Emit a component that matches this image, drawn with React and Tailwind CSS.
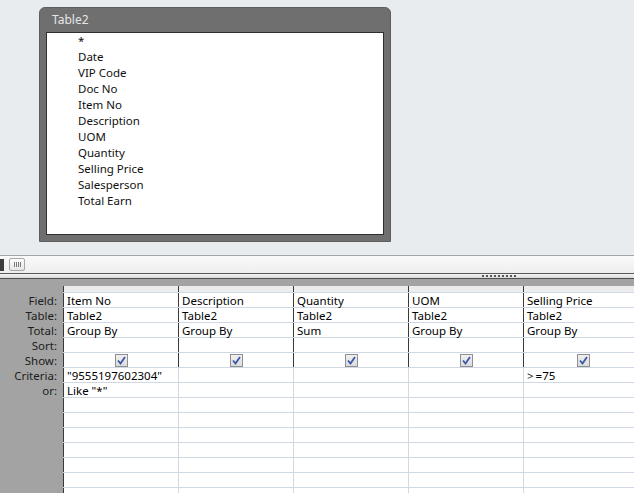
import React from "react";

const fields = ["*", "Date", "VIP Code", "Doc No", "Item No", "Description", "UOM", "Quantity", "Selling Price", "Salesperson", "Total Earn"];

const cols = [
  { field: "Item No", table: "Table2", total: "Group By", criteria: "\"9555197602304\"", or: "Like \"*\"" },
  { field: "Description", table: "Table2", total: "Group By", criteria: "", or: "" },
  { field: "Quantity", table: "Table2", total: "Sum", criteria: "", or: "" },
  { field: "UOM", table: "Table2", total: "Group By", criteria: "", or: "" },
  {
    field: "Selling Price",
    table: "Table2",
    total: "Group By",
    criteria: (
      <span>
        <span className="text-[#222]">&gt;</span>
        <span className="ml-[2px]">=75</span>
      </span>
    ),
    or: "",
  },
];

function Check() {
  return (
    <div className="w-[13px] h-[13px] border border-[#8f8f8f] bg-gradient-to-b from-[#f0f0f0] to-[#dcdcdc] flex items-center justify-center">
      <svg width="9" height="9" viewBox="0 0 9 9">
        <path d="M1 4.5 L3.5 7.5 L8 1" fill="none" stroke="#3c57a8" strokeWidth="1.8" />
      </svg>
    </div>
  );
}

function Cell({ children, dark, center, last }) {
  return (
    <div
      className={`h-full shrink-0 ${last ? "w-[120px]" : "w-[115px]"} border-l ${dark ? "border-[#3a3a3a]" : "border-[#d0d7e5]"} ${center ? "justify-center" : "pl-[3px]"} flex items-center whitespace-nowrap`}
    >
      {children}
    </div>
  );
}

function Row({ label, values, dark, isCheck }) {
  return (
    <div className="flex h-[15px] shrink-0">
      <div className="w-[63px] shrink-0 bg-[#a3a3a3] text-right pr-[6px] text-[#1c1c1c] leading-[15px]">{label}</div>
      <div className="flex bg-white border-b border-[#d0d7e5] h-[15px] leading-[15px] text-black">
        {values.map((v, i) => (
          <Cell key={i} dark={i === 0 || dark} center={isCheck} last={i === values.length - 1}>
            {isCheck ? <Check /> : v}
          </Cell>
        ))}
      </div>
    </div>
  );
}

export default function App() {
  const font = { fontFamily: '"Noto Sans", "Liberation Sans", sans-serif' };
  return (
    <div className="w-[634px] h-[493px] overflow-hidden flex flex-col text-[11.5px]" style={font}>
      {/* top design area */}
      <div className="h-[256px] shrink-0 bg-[#e9ecef] pt-[7px] pl-[39px] border-b border-[#a5a5a5]">
        <div className="w-[352px] h-[235px] bg-[#6f6f6f] rounded-t-[6px] border border-[#5e5e5e] flex flex-col px-[6px] pb-[6px]">
          <div className="h-[24px] text-[12px] text-[#e6e6e6] pl-[6px] pt-[5px] leading-[14px]">Table2</div>
          <div className="flex-1 bg-white border border-[#2e2e2e] pl-[31px] text-[#101010] leading-[16px]">
            {fields.map((f) => (
              <div key={f} className="h-[16px]">{f}</div>
            ))}
          </div>
        </div>
      </div>
      {/* scroll area */}
      <div className="h-[18px] shrink-0 bg-gradient-to-b from-[#fafafa] to-[#eeeeee] flex items-center border-b border-[#5a5a5a]">
        <div className="w-[4px] h-[12px] bg-[#3d3d3d]" />
        <div className="ml-[5px] w-[16px] h-[13px] border border-[#a8a8a8] rounded-[2px] bg-gradient-to-b from-[#fdfdfd] to-[#e6e6e6] flex items-center justify-center gap-[1px]">
          <div className="w-px h-[5px] bg-[#7a7a7a]" />
          <div className="w-px h-[5px] bg-[#7a7a7a]" />
          <div className="w-px h-[5px] bg-[#7a7a7a]" />
          <div className="w-px h-[5px] bg-[#7a7a7a]" />
        </div>
      </div>
      {/* splitter */}
      <div className="h-[5px] shrink-0 bg-gradient-to-b from-[#f4f4f4] to-[#dcdcdc] border-b border-[#505050] flex items-center pl-[482px] gap-[2px]">
        {Array.from({ length: 9 }).map((_, i) => (
          <div key={i} className="w-[2px] h-[2px] bg-[#555555]" />
        ))}
      </div>
      <div className="h-[7px] shrink-0 bg-[#a3a3a3]" />
      {/* grid */}
      <div className="flex-1 flex flex-col bg-[#a3a3a3] overflow-hidden">
        <div className="flex h-[7px] shrink-0">
          <div className="w-[63px] shrink-0 bg-[#a3a3a3]" />
          <div className="flex bg-[#ececec] border-b border-[#d0d7e5] h-[7px]">
            {cols.map((c, i) => (
              <Cell key={i} dark last={i === cols.length - 1}></Cell>
            ))}
          </div>
        </div>
        <Row label="Field:" values={cols.map((c) => c.field)} dark />
        <Row label="Table:" values={cols.map((c) => c.table)} dark />
        <Row label="Total:" values={cols.map((c) => c.total)} dark />
        <Row label="Sort:" values={cols.map(() => "")} dark />
        <Row label="Show:" values={cols.map(() => "")} dark isCheck />
        <Row label="Criteria:" values={cols.map((c) => c.criteria)} />
        <Row label="or:" values={cols.map((c) => c.or)} />
        {Array.from({ length: 8 }).map((_, i) => (
          <Row key={i} label="" values={cols.map(() => "")} />
        ))}
      </div>
    </div>
  );
}
